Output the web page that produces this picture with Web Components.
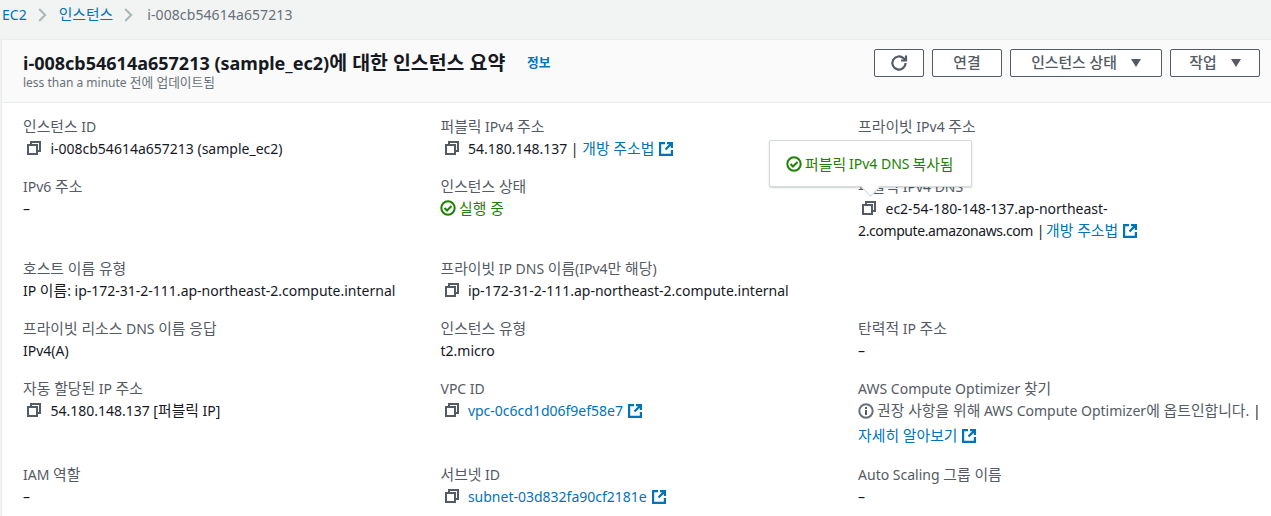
<!DOCTYPE html>
<html lang="ko">
<head>
<meta charset="utf-8">
<title>인스턴스 요약</title>
<style>
  html, body { margin: 0; padding: 0; height: 516px; overflow: hidden; background: #f2f3f3; }
  body { font: 14px/22px "Noto Sans", "Noto Sans CJK KR", sans-serif; color: #16191f; }
</style>
</head>
<body>
<ec2-crumbs></ec2-crumbs>
<instance-card>
  <card-header slot="header"></card-header>

  <kv-item label="인스턴스 ID"><copy-icon></copy-icon>i-008cb54614a657213 (sample_ec2)</kv-item>
  <kv-item label="퍼블릭 IPv4 주소"><copy-icon></copy-icon>54.180.148.137 | <a-link>개방 주소법</a-link></kv-item>
  <kv-item label="프라이빗 IPv4 주소"></kv-item>

  <kv-item label="IPv6 주소">–</kv-item>
  <kv-item label="인스턴스 상태"><status-ok>실행 중</status-ok></kv-item>
  <kv-item label="퍼블릭 IPv4 DNS"><copy-icon></copy-icon>ec2-54-180-148-137.ap-northeast-<br><span style="letter-spacing:-.4px">2.compute.amazonaws.com</span> | <a-link style="margin-left:-2px">개방 주소법</a-link>
    <copied-tip slot="over">퍼블릭 IPv4 DNS 복사됨</copied-tip>
  </kv-item>

  <kv-item label="호스트 이름 유형">IP 이름: ip-172-31-2-111.ap-northeast-2.compute.internal</kv-item>
  <kv-item label="프라이빗 IP DNS 이름(IPv4만 해당)"><copy-icon></copy-icon>ip-172-31-2-111.ap-northeast-2.compute.internal</kv-item>
  <kv-item></kv-item>

  <kv-item label="프라이빗 리소스 DNS 이름 응답">IPv4(A)</kv-item>
  <kv-item label="인스턴스 유형">t2.micro</kv-item>
  <kv-item label="탄력적 IP 주소">–</kv-item>

  <kv-item label="자동 할당된 IP 주소"><copy-icon></copy-icon>54.180.148.137 [퍼블릭 IP]</kv-item>
  <kv-item label="VPC ID"><copy-icon></copy-icon><a-link>vpc-0c6cd1d06f9ef58e7</a-link></kv-item>
  <kv-item label="AWS Compute Optimizer 찾기" tall><info-note>권장 사항을 위해 AWS Compute Optimizer에 옵트인합니다.</info-note> |<div style="margin-top:3px"><a-link>자세히 알아보기</a-link></div></kv-item>

  <kv-item label="IAM 역할">–</kv-item>
  <kv-item label="서브넷 ID"><copy-icon></copy-icon><a-link>subnet-03d832fa90cf2181e</a-link></kv-item>
  <kv-item label="Auto Scaling 그룹 이름">–</kv-item>
</instance-card>

<script>
  const def = (name, html, setup) => {
    customElements.define(name, class extends HTMLElement {
      constructor() {
        super();
        this.attachShadow({ mode: "open" }).innerHTML = html.trim();
        if (setup) setup(this);
      }
    });
  };

  const chevron = `<svg width="9" height="14" viewBox="0 0 9 14" fill="none" stroke="#aab7b8" stroke-width="2"><path d="M1.2 1l6 6-6 6"/></svg>`;
  const okIcon = `<svg width="16" height="16" viewBox="0 0 16 16" fill="none" stroke="#1d8102" stroke-width="2"><circle cx="8" cy="8" r="6.7"/><path d="M4.5 8l2.5 2.5 4.5-4.5"/></svg>`;

  def("ec2-crumbs", `
    <style>
      :host { display: flex; align-items: center; height: 30px; padding-left: 2px; color: #687078; font-size: 14px; }
      .a { color: #0073bb; }
      svg { margin: 0 12px 0 11px; flex: none; }
      .last { letter-spacing: .1px; margin-left: 2px; }
    </style>
    <span class="a">EC2</span>${chevron}<span class="a">인스턴스</span>${chevron}<span class="last">i-008cb54614a657213</span>`);

  def("instance-card", `
    <style>
      :host { display: block; margin: 9px 0 0 1px; background: #fff; border-left: 1px solid #eaeded; border-top: 1px solid #eaeded; height: 480px; overflow: hidden; }
      .grid { display: grid; grid-template-columns: 417.5px 417.6px 1fr; padding: 13px 0 0 21px; }
    </style>
    <slot name="header"></slot>
    <div class="grid"><slot></slot></div>`);

  def("card-header", `
    <style>
      :host { display: flex; justify-content: space-between; align-items: flex-start; height: 63px; box-sizing: border-box; padding: 8px 11px 0 21px; background: #fafafa; border-bottom: 1px solid #eaeded; }
      h1 { margin: 3px 0 0; font-size: 18px; line-height: 24px; font-weight: 700; color: #16191f; }
      .info { font-size: 12px; font-weight: 700; color: #0073bb; margin-left: 17px; vertical-align: 3px; }
      .sub { font-size: 12px; line-height: 14px; color: #687078; margin-top: 1px; }
      .btns { display: flex; gap: 8px; margin-top: 1px; }
    </style>
    <div>
      <h1>i-008cb54614a657213 (sample_ec2)에 대한 인스턴스 요약 <span class="info">정보</span></h1>
      <div class="sub">less than a minute 전에 업데이트됨</div>
    </div>
    <div class="btns">
      <aws-button w="50"><svg width="18" height="18" viewBox="0 0 18 18" fill="none" stroke="#545b64" stroke-width="2.2"><path d="M15.6 9a6.6 6.6 0 1 1-2-4.7L15.5 6"/><path d="M16 1.5V6.5H11"/></svg></aws-button>
      <aws-button w="70">연결</aws-button>
      <aws-button w="152" caret>인스턴스 상태</aws-button>
      <aws-button w="90" caret>작업</aws-button>
    </div>`);

  def("aws-button", `
    <style>
      :host { display: flex; align-items: center; justify-content: center; gap: 14px; height: 28px; box-sizing: border-box; padding-bottom: 1px; border: 1px solid #545b64; border-radius: 2px; background: #fff; color: #545b64; font-size: 14px; font-weight: 500; }
      .c { display: none; width: 0; height: 0; border-left: 5.5px solid transparent; border-right: 5.5px solid transparent; border-top: 8px solid #545b64; }
      :host([caret]) .c { display: block; }
      ::slotted(svg) { display: block; }
    </style>
    <slot></slot><span class="c"></span>`, el => { el.style.width = el.getAttribute("w") + "px"; });

  def("kv-item", `
    <style>
      :host { display: block; position: relative; padding-bottom: 16px; min-height: 44px; color: #16191f; padding-right: 10px; }
      .l { color: #545b64; height: 22px; white-space: nowrap; }
      .v { line-height: 22px; }
      :host([tall]) { padding-bottom: 17px; }
    </style>
    <div class="l"></div>
    <div class="v"><slot></slot></div>
    <slot name="over"></slot>`, el => {
      el.shadowRoot.querySelector(".l").textContent = el.getAttribute("label") || "";
    });

  def("copy-icon", `
    <style>
      :host { display: inline-block; width: 14px; height: 14px; margin: 0 9px 0 4.4px; vertical-align: -1px; }
      svg { display: block; }
    </style>
    <svg width="14" height="14" viewBox="0 0 14 14" fill="none" stroke="#545b64" stroke-width="2"><path d="M4 3.5V1h9v9h-2.5"/><rect x="1" y="4" width="9" height="9"/></svg>`);

  def("a-link", `<style>
      :host { color: #0073bb; white-space: nowrap; }
      svg { margin-left: 5px; vertical-align: -2px; }
    </style><slot></slot><svg width="14" height="14" viewBox="0 0 14 14" fill="none" stroke="#0073bb" stroke-width="2.2"><path d="M6 1.1H1.1v11.8h11.8V8"/><path d="M8 1.1h4.9V6M12.9 1.1L6.5 7.5"/></svg>`);

  def("status-ok", `
    <style>
      :host { display: flex; align-items: center; gap: 3px; height: 20px; padding-bottom: 2px; margin-left: -.5px; color: #1d8102; }
      svg { flex: none; }
    </style>
    ${okIcon}<slot></slot>`);

  def("info-note", `<style>
      :host { color: #545b64; }
      svg { vertical-align: -3px; margin-right: 3px; }
    </style><svg width="16" height="16" viewBox="0 0 16 16"><circle cx="8" cy="8" r="6.7" fill="none" stroke="#687078" stroke-width="2"/><path d="M7 7h2v5H7zM7 4h2v2H7z" fill="#545b64"/></svg><slot></slot>`);

  def("copied-tip", `
    <style>
      :host { position: absolute; left: -89px; top: -36px; z-index: 2; width: 203px; height: 47px; box-sizing: border-box; display: flex; align-items: center; gap: 3px; padding: 1px 0 0 16px; background: #fff; border: 1px solid #d5dbdb; border-radius: 2px; box-shadow: 0 1px 2px rgba(0,28,36,.2); color: #1d8102; }
      .arrow { position: absolute; left: 94px; top: 40px; width: 12px; height: 12px; background: #fff; transform: rotate(45deg); border-right: 1px solid #d5dbdb; border-bottom: 1px solid #d5dbdb; }
      svg { flex: none; }
    </style>
    ${okIcon}<slot></slot><span class="arrow"></span>`);

  // hangul in the reference is set about 6% wider than the latin next to it
  const wrapHangul = root => {
    const walker = document.createTreeWalker(root, NodeFilter.SHOW_TEXT);
    const nodes = [];
    while (walker.nextNode()) {
      const p = walker.currentNode.parentElement;
      if (!p || !["STYLE", "SCRIPT", "TITLE"].includes(p.tagName)) nodes.push(walker.currentNode);
    }
    nodes.forEach(n => {
      const parts = n.data.split(/([\uAC00-\uD7A3]+(?:\s+[\uAC00-\uD7A3]+)*)/);
      if (parts.length < 2) return;
      const size = n.parentElement && n.parentElement.tagName === "H1" ? "1.08em" : "1.06em";
      const frag = document.createDocumentFragment();
      parts.forEach((t, i) => {
        if (i % 2) {
          const s = document.createElement("span");
          s.style.cssText = `font-size:${size};line-height:1`;
          s.textContent = t;
          frag.append(s);
        } else if (t) frag.append(t);
      });
      n.replaceWith(frag);
    });
    root.querySelectorAll("*").forEach(el => { if (el.shadowRoot) wrapHangul(el.shadowRoot); });
  };
  wrapHangul(document.body);
</script>
</body>
</html>
